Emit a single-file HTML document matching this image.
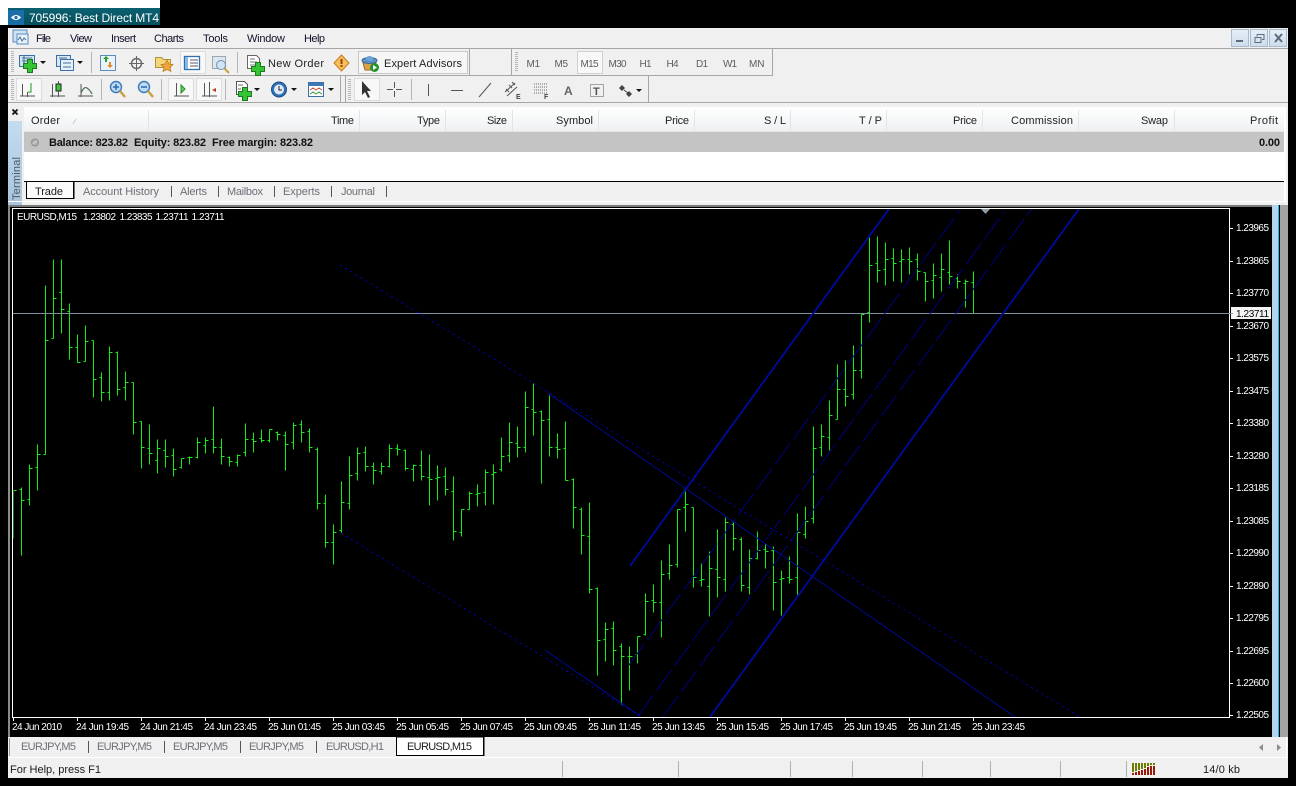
<!DOCTYPE html>
<html><head><meta charset="utf-8"><title>MT4</title>
<style>
html,body{margin:0;padding:0;background:#000;width:1296px;height:786px;overflow:hidden}
svg{display:block;position:absolute;left:0;top:0}
text{font-family:"Liberation Sans",sans-serif;font-size:11px;fill:#1a1a1a}
.w text{fill:#fff;font-size:10px}
.tf text{fill:#5c5c5c;font-size:10px}
.ot text{fill:#6e6e78}
.h text{fill:#222}
.b text{font-weight:bold;fill:#111}
.m text{fill:#10102a}
</style></head><body>
<svg width="1296" height="786" viewBox="0 0 1296 786" xmlns="http://www.w3.org/2000/svg">
<defs>
<linearGradient id="hd" x1="0" y1="0" x2="0" y2="1"><stop offset="0" stop-color="#fff"/><stop offset="1" stop-color="#eef0f2"/></linearGradient>
<linearGradient id="bl" x1="0" y1="0" x2="0" y2="1"><stop offset="0" stop-color="#c4dcf0"/><stop offset="1" stop-color="#a9c4dc"/></linearGradient>
<linearGradient id="btn" x1="0" y1="0" x2="0" y2="1"><stop offset="0" stop-color="#e6eff7"/><stop offset="1" stop-color="#cddcec"/></linearGradient>
<linearGradient id="tt" x1="0" y1="0" x2="0" y2="1"><stop offset="0" stop-color="#0a6070"/><stop offset="1" stop-color="#07505f"/></linearGradient>
<clipPath id="cc"><rect x="13" y="209" width="1217" height="508"/></clipPath>
<g id="plus"><path d="M-2.500-6.500h5v4h4v5h-4v4h-5v-4h-4v-5h4z" fill="#35c435" stroke="#1c7a1c" stroke-width="1"/></g>
<path id="arr" d="M-3 0h6l-3 3z" fill="#111"/>
</defs>

<!-- title -->
<rect x="0" y="0" width="160" height="25" fill="#fff"/>
<rect x="8" y="8" width="152" height="17" fill="url(#tt)"/>
<rect x="8" y="10" width="16" height="15" fill="#1a6ea8"/>
<path d="M11 17.500q5-5 10 0q-5 5-10 0z" fill="#fff"/><circle cx="16" cy="17.500" r="1.600" fill="#1a6ea8"/>
<text x="29" y="22" style="font-size:12px;fill:#fff" textLength="130">705996: Best Direct MT4</text>
<rect x="0" y="25" width="160" height="3" fill="#000"/>

<!-- window bg -->
<rect x="8" y="28" width="1280" height="177" fill="#f0f0f0"/>

<!-- menu -->
<rect x="13" y="30" width="14" height="12" fill="#cfe2f4" stroke="#5a8cc0"/>
<rect x="17" y="34" width="11" height="10" fill="#e8f0f8" stroke="#5a8cc0"/>
<path d="M18 40l2-3 2 4 2-3 2 2" fill="none" stroke="#4a6f95"/>
<g class="m">
<text x="36" y="42" textLength="15">File</text>
<text x="70" y="42" textLength="22">View</text>
<text x="111" y="42" textLength="25">Insert</text>
<text x="154" y="42" textLength="30">Charts</text>
<text x="203" y="42" textLength="25">Tools</text>
<text x="247" y="42" textLength="38">Window</text>
<text x="304" y="42" textLength="21">Help</text>
</g>
<!-- window buttons -->
<g stroke="#a8bacb" fill="url(#btn)">
<rect x="1231.500" y="29.500" width="17" height="17"/><rect x="1250.500" y="29.500" width="17" height="17"/><rect x="1269.500" y="29.500" width="17" height="17"/>
</g>
<rect x="1236" y="40" width="7" height="2" fill="#5a6c7e"/>
<path d="M1257 34.500h7v5h-2M1257 34.500v2M1255 37.500h6v5h-6z" fill="none" stroke="#5a6c7e"/>
<path d="M1275 34l7 8M1282 34l-7 8" stroke="#5a6c7e" stroke-width="2"/>

<!-- toolbar lines -->
<rect x="8" y="48" width="1280" height="1" fill="#a6a6a6"/>
<rect x="8" y="75" width="765" height="1" fill="#a6a6a6"/>
<rect x="8" y="102" width="1280" height="1" fill="#a6a6a6"/>
<g fill="#a6a6a6"><rect x="469" y="49" width="1" height="26"/><rect x="511" y="49" width="1" height="26"/><rect x="772" y="49" width="1" height="27"/><rect x="340" y="76" width="1" height="26"/><rect x="345" y="76" width="1" height="26"/><rect x="648" y="76" width="1" height="26"/></g>
<g stroke="#b8b8b8" stroke-dasharray="1 1" stroke-width="3">
<path d="M12.500 51V73M12.500 79V100M349.500 79V100"/><path d="M516.500 52V72"/>
</g>
<g fill="#b4b4b4"><rect x="91" y="52" width="1" height="21"/><rect x="237" y="52" width="1" height="21"/><rect x="101" y="79" width="1" height="21"/><rect x="161" y="79" width="1" height="21"/><rect x="225" y="79" width="1" height="21"/><rect x="411" y="79" width="1" height="21"/></g>

<!-- toolbar 1 icons -->
<rect x="19.500" y="55.500" width="15" height="11" fill="#cfe3f5" stroke="#3c6fa6"/><path d="M22 58h10M22 61h8M24 56v9" stroke="#4a6d92" fill="none"/>
<use href="#plus" x="30" y="66"/><use href="#arr" x="43" y="61"/>
<rect x="56.500" y="55.500" width="14" height="11" fill="#d8e8f6" stroke="#3c6fa6"/><rect x="60.500" y="59.500" width="13" height="11" fill="#e6f0f9" stroke="#3c6fa6"/><path d="M59 58h8M63 63h8M63 67h8" stroke="#4a6d92"/>
<use href="#arr" x="80" y="61"/>
<rect x="100.500" y="55.500" width="15" height="15" fill="#eaf3fb" stroke="#5b8db8"/><path d="M105 62v-3h-2l3-3 3 3h-2v3z" fill="#2aa02a"/><path d="M109 62v3h-2l3 3 3-3h-2v-3z" fill="#e08a20"/>
<circle cx="136.500" cy="63.500" r="5" fill="none" stroke="#666" stroke-width="1.400"/><path d="M136.500 56v15M129 63.500h15" stroke="#666"/>
<path d="M155.500 57.500h6l2 2h7v8h-15z" fill="#f5d77a" stroke="#b0913a"/><path d="M167 60l2 4 4 .5-3 3 1 4-4-2-4 2 1-4-3-3 4-.5z" fill="#f0a53a" stroke="#b87a20" stroke-width=".7"/>
<rect x="180.500" y="51.500" width="25" height="22" fill="#f8f8f8" stroke="#dcdcdc"/>
<rect x="184.500" y="56.500" width="15" height="13" fill="#fff" stroke="#2f6fb0" stroke-width="1.300"/><rect x="185" y="57" width="3" height="12" fill="#8ab8e0"/><path d="M190 60h8M190 63h8M190 66h8" stroke="#557"/>
<rect x="212.500" y="56.500" width="13" height="12" fill="#dfe6ee" stroke="#9aa6b2"/><circle cx="221" cy="65" r="4.500" fill="#cfe4f5" stroke="#6f93b3"/><path d="M224 68l5 5" stroke="#c9a040" stroke-width="2"/>
<path d="M247.500 55.500h9l3 3v10h-12z" fill="#fff" stroke="#666"/><path d="M250 59h5M250 62h7M250 65h5" stroke="#777"/><use href="#plus" x="258" y="69"/>
<g class="h"><text x="268" y="67" textLength="56">New Order</text></g>
<path d="M341.500 55l7.500 8-7.500 8-7.500-8z" fill="#f6c05a" stroke="#c67c1c"/><rect x="340.500" y="59" width="2" height="5" fill="#a03a10"/><rect x="340.500" y="65" width="2" height="2" fill="#a03a10"/>
<rect x="358.500" y="51.500" width="109" height="22" fill="#f6f6f6" stroke="#c8c8c8"/>
<path d="M363 63l13 0-2 7h-9z" fill="#dfa04a" stroke="#a06a20"/><ellipse cx="369.500" cy="60.500" rx="7.500" ry="3" fill="#5c92c8" stroke="#386a9a"/><ellipse cx="369.500" cy="58.500" rx="3.500" ry="2.500" fill="#6da4d8"/>
<circle cx="374.500" cy="67.500" r="4.500" fill="#23932b"/><path d="M373 65l4 2.500-4 2.500z" fill="#fff"/>
<g class="h"><text x="384" y="67" textLength="78">Expert Advisors</text></g>

<!-- timeframes -->
<rect x="577.500" y="51.500" width="25" height="22" fill="#f8f8f8" stroke="#d0d0d0"/>
<g class="tf">
<text x="526.500" y="67" textLength="13.500">M1</text><text x="554.500" y="67" textLength="13.500">M5</text><text x="580.500" y="67" textLength="18">M15</text><text x="608.500" y="67" textLength="18">M30</text><text x="639.500" y="67" textLength="12">H1</text><text x="666.500" y="67" textLength="12">H4</text><text x="696" y="67" textLength="12">D1</text><text x="723" y="67" textLength="14">W1</text><text x="749" y="67" textLength="15.500">MN</text>
</g>

<!-- toolbar 2 icons -->
<rect x="16.500" y="78.500" width="25" height="22" fill="#f8f8f8" stroke="#dcdcdc"/>
<path d="M22.500 84v12M35 96H20M27.500 92v5" fill="none" stroke="#555"/><path d="M31 83v9h-3" fill="none" stroke="#1e9a1e"/>
<path d="M52.500 84v13M65 96H50" fill="none" stroke="#555"/><path d="M58.500 81v16" stroke="#555"/><rect x="56" y="84" width="5" height="7" fill="#38c838" stroke="#222"/>
<path d="M81 84v13M93 96H78" fill="none" stroke="#555"/><path d="M81 93q3-7 6-5t5 6" fill="none" stroke="#4a6f55" stroke-width="1.200"/>
<circle cx="116" cy="87" r="5.500" fill="#bcdcf5" stroke="#3c7ab5" stroke-width="1.400"/><path d="M113 87h6M116 84v6" stroke="#2d6aa5" stroke-width="1.500"/><path d="M120 91l5 6" stroke="#c9a040" stroke-width="2.500"/>
<circle cx="144" cy="87" r="5.500" fill="#bcdcf5" stroke="#3c7ab5" stroke-width="1.400"/><path d="M141 87h6" stroke="#2d6aa5" stroke-width="1.500"/><path d="M148 91l5 6" stroke="#c9a040" stroke-width="2.500"/>
<rect x="168.500" y="78.500" width="25" height="22" fill="#f8f8f8" stroke="#dcdcdc"/><rect x="196.500" y="78.500" width="25" height="22" fill="#f8f8f8" stroke="#dcdcdc"/>
<path d="M176.500 83v13M189 96H174" fill="none" stroke="#555"/><path d="M181 85l4 4-4 4z" fill="#6fd06f" stroke="#1e8a1e"/>
<path d="M204.500 83v13M217 96H202M209.500 82v15" fill="none" stroke="#555"/><path d="M216 88l-4 2 4 2z" fill="#c03a20"/>
<path d="M236.500 81.500h8l3 3v10h-11z" fill="#fff" stroke="#555"/><path d="M238 85h5M238 89h3" stroke="#666"/><use href="#plus" x="245" y="94"/><use href="#arr" x="257" y="88"/>
<circle cx="279" cy="89.500" r="7.500" fill="#2d72b8" stroke="#1a4a80"/><circle cx="279" cy="89.500" r="5" fill="#dfeaf5"/><path d="M279 86v4h3" fill="none" stroke="#223" /><use href="#arr" x="294" y="88"/>
<rect x="308.500" y="82.500" width="15" height="14" fill="#fff" stroke="#3c6fa6"/><rect x="309" y="83" width="14" height="3" fill="#3c7ab5"/><path d="M310 90l3-2 3 2 3-2 3 2" fill="none" stroke="#d05030"/><path d="M310 94l3-2 3 2 3-2 3 2" fill="none" stroke="#3a9a3a"/><use href="#arr" x="331" y="88"/>
<rect x="354.500" y="78.500" width="25" height="22" fill="#f8f8f8" stroke="#dcdcdc"/>
<path d="M362 81l0 14 3-3 3 6 2-1-3-6h4z" fill="#333"/>
<path d="M394.500 82v6M394.500 91v6M387 89.500h6M396 89.500h6" stroke="#555"/>
<path d="M428.500 84v12" stroke="#555"/><path d="M451 90.500h12" stroke="#555"/><path d="M479 97l12-14" stroke="#555"/>
<path d="M505 92l10-9M507 96l10-9M509 85l3 3M512 82l3 3M506 89l3 3" stroke="#555" fill="none"/>
<text x="516" y="99" style="font-size:7px;font-weight:bold;fill:#444">E</text>
<path d="M534 84h13M534 87h13M534 90h13M534 93h13" stroke="#666" stroke-dasharray="1 1"/>
<text x="544" y="99" style="font-size:7px;font-weight:bold;fill:#444">F</text>
<text x="564" y="95" style="font-size:12px;font-weight:bold;fill:#666">A</text>
<rect x="590.500" y="84.500" width="13" height="12" fill="none" stroke="#555" stroke-dasharray="1 1"/>
<text x="593" y="95" style="font-size:11px;font-weight:bold;fill:#555">T</text>
<path d="M622 85l3 3-3 3-3-3zM629 91l3 3-3 3-3-3z" fill="#444"/><path d="M624 90l4 3" stroke="#444"/><use href="#arr" x="639" y="89"/>

<!-- terminal -->
<rect x="8" y="103" width="15" height="18" fill="#f0f0f0"/>
<rect x="8" y="121" width="14" height="84" fill="url(#bl)"/>
<path d="M12.500 109.500l5 5M17.500 109.500l-5 5" stroke="#111" stroke-width="1.800"/>
<text transform="translate(20 200) rotate(-90)" textLength="43" style="fill:#4c5a66">Terminal</text>
<rect x="24" y="107" width="1260" height="74" fill="#fff"/>
<rect x="24" y="107" width="1260" height="25" fill="url(#hd)"/>
<rect x="24" y="131" width="1260" height="1" fill="#e4e4e4"/>
<g fill="#e2e4e6"><rect x="148" y="110" width="1" height="21"/><rect x="359" y="110" width="1" height="21"/><rect x="445" y="110" width="1" height="21"/><rect x="512" y="110" width="1" height="21"/><rect x="598" y="110" width="1" height="21"/><rect x="694" y="110" width="1" height="21"/><rect x="790" y="110" width="1" height="21"/><rect x="886" y="110" width="1" height="21"/><rect x="982" y="110" width="1" height="21"/><rect x="1078" y="110" width="1" height="21"/><rect x="1174" y="110" width="1" height="21"/></g>
<g class="h">
<text x="31" y="124" textLength="29">Order</text>
<text x="331" y="124" textLength="23">Time</text><text x="417" y="124" textLength="23">Type</text><text x="487" y="124" textLength="20">Size</text><text x="556" y="124" textLength="37">Symbol</text><text x="665" y="124" textLength="24">Price</text><text x="764" y="124" textLength="22">S / L</text><text x="859" y="124" textLength="23">T / P</text><text x="953" y="124" textLength="24">Price</text><text x="1011" y="124" textLength="62">Commission</text><text x="1141" y="124" textLength="27">Swap</text><text x="1250" y="124" textLength="28">Profit</text>
</g>
<path d="M73 124l3-5" stroke="#c8c8c8" fill="none"/>
<rect x="24" y="132" width="1260" height="20" fill="#c4c4c4"/>
<circle cx="35" cy="142.500" r="3.500" fill="#b0b0b0" stroke="#8e8e8e"/><path d="M33 144l4-3" stroke="#dcdcdc"/>
<g class="b"><text x="49" y="146" textLength="79">Balance: 823.82</text><text x="134" y="146" textLength="72">Equity: 823.82</text><text x="212" y="146" textLength="101">Free margin: 823.82</text><text x="1259" y="146" textLength="21">0.00</text></g>
<rect x="24" y="181" width="1260" height="1" fill="#000"/>
<rect x="1284" y="107" width="2" height="95" fill="#fff"/>
<rect x="8" y="201" width="1278" height="1" fill="#fff"/>
<rect x="27" y="182" width="46" height="16" fill="#fbfbfb"/>
<rect x="26" y="198" width="48" height="1" fill="#000"/><rect x="73" y="182" width="1.500" height="17" fill="#000"/><rect x="26" y="182" width="1" height="17" fill="#000"/>
<text x="35" y="195" textLength="28">Trade</text>
<g class="ot">
<text x="83" y="195" textLength="76">Account History</text><text x="180" y="195" textLength="27">Alerts</text><text x="227" y="195" textLength="36">Mailbox</text><text x="283" y="195" textLength="37">Experts</text><text x="341" y="195" textLength="34">Journal</text>
</g>
<g fill="#555"><rect x="171" y="186" width="1" height="11"/><rect x="218" y="186" width="1" height="11"/><rect x="274" y="186" width="1" height="11"/><rect x="331" y="186" width="1" height="11"/><rect x="386" y="186" width="1" height="11"/></g>

<!-- chart area -->
<rect x="8" y="205" width="1280" height="532" fill="#000"/>
<rect x="8" y="205" width="1264" height="2" fill="#7a7a7a"/>
<rect x="8" y="205" width="2" height="532" fill="#8a8a8a"/>
<rect x="1272" y="205" width="6" height="532" fill="#b6d3ee"/>
<rect x="1278" y="205" width="1" height="532" fill="#10bfe8"/>
<rect x="1280" y="205" width="8" height="532" fill="#a3a3a3"/>
<rect x="12.500" y="208.500" width="1217" height="509" fill="#000" stroke="#fff"/>

<!-- bars -->
<g clip-path="url(#cc)" transform="translate(.5 .5)" shape-rendering="crispEdges">
<path fill="none" stroke="#10f010" stroke-width="1" d="M13 490V538M13 490h3
M21 487V555M19 489h2M21 500h3
M29 464V505M27 499h2M29 468h3
M37 444V490M35 467h2M37 454h3
M45 285V454M43 454h2M45 340h3
M53 259V338M51 338h2M53 298h3
M61 259V333M59 292h2M61 309h3
M69 303V359M67 311h2M69 347h3
M77 334V362M75 347h2M77 362h3
M85 325V361M83 361h2M85 341h3
M93 340V397M91 340h2M93 379h3
M101 372V401M99 377h2M101 392h3
M109 346V400M107 392h2M109 352h3
M117 351V395M115 352h2M117 389h3
M125 371V400M123 387h2M125 382h3
M133 382V434M131 382h2M133 422h3
M141 421V468M139 421h2M141 447h3
M149 424V464M147 448h2M149 453h3
M157 439V473M155 460h2M157 448h3
M165 439V467M163 450h2M165 456h3
M173 448V476M171 455h2M173 469h3
M181 458V468M179 467h2M181 458h3
M189 456V464M187 457h2M189 457h3
M197 437V458M195 457h2M197 442h3
M205 437V453M203 445h2M205 440h3
M213 406V453M211 439h2M213 447h3
M221 438V464M219 447h2M221 456h3
M229 456V466M227 457h2M229 461h3
M237 454V466M235 462h2M237 455h3
M245 423V456M243 452h2M245 439h3
M253 432V452M251 439h2M253 441h3
M261 429V442M259 438h2M261 440h3
M269 429V442M267 440h2M269 429h3
M277 431V440M275 432h2M277 434h3
M285 431V470M283 435h2M285 444h3
M293 422V449M291 442h2M293 425h3
M301 420V442M299 424h2M301 432h3
M309 428V452M307 431h2M309 447h3
M317 447V509M315 449h2M317 503h3
M325 494V547M323 503h2M325 542h3
M333 524V564M331 542h2M333 532h3
M341 481V533M339 530h2M341 502h3
M349 456V509M347 503h2M349 475h3
M357 447V480M355 473h2M357 453h3
M365 446V471M363 452h2M365 466h3
M373 462V484M371 466h2M373 470h3
M381 462V474M379 471h2M381 466h3
M389 444V467M387 466h2M389 448h3
M397 444V455M395 448h2M397 449h3
M405 449V470M403 450h2M405 468h3
M413 464V481M411 469h2M413 465h3
M421 450V480M419 465h2M421 476h3
M429 454V505M427 477h2M429 479h3
M437 465V500M435 478h2M437 477h3
M445 467V495M443 476h2M445 489h3
M453 476V540M451 491h2M453 531h3
M461 509V536M459 532h2M461 509h3
M469 491V509M467 509h2M469 493h3
M477 484V506M475 494h2M477 493h3
M485 469V505M483 492h2M485 472h3
M493 464V504M491 474h2M493 472h3
M501 437V471M499 469h2M501 456h3
M509 422V462M507 455h2M509 442h3
M517 426V457M515 443h2M517 447h3
M525 391V452M523 447h2M525 407h3
M533 383V435M531 409h2M533 412h3
M541 410V483M539 411h2M541 420h3
M549 395V456M547 419h2M549 447h3
M557 433V458M555 447h2M557 449h3
M565 421V480M563 448h2M565 480h3
M573 478V528M571 479h2M573 507h3
M581 507V554M579 509h2M581 535h3
M589 502V593M587 536h2M589 589h3
M597 587V675M595 588h2M597 640h3
M605 622V661M603 639h2M605 629h3
M613 621V665M611 628h2M613 650h3
M621 643V704M619 646h2M621 656h3
M629 646V690M627 656h2M629 656h3
M637 636V663M635 654h2M637 636h3
M645 593V635M643 634h2M645 601h3
M653 584V612M651 600h2M653 602h3
M661 560V637M659 602h2M661 574h3
M669 544V579M667 573h2M669 565h3
M677 509V567M675 564h2M677 509h3
M685 491V531M683 507h2M685 504h3
M693 507V587M691 507h2M693 577h3
M701 563V586M699 580h2M701 579h3
M709 551V616M707 586h2M709 568h3
M717 529V597M715 569h2M717 577h3
M725 517V591M723 579h2M725 522h3
M733 522V550M731 524h2M733 538h3
M741 537V591M739 539h2M741 585h3
M749 549V594M747 587h2M749 558h3
M757 531V559M755 558h2M757 550h3
M765 544V568M763 549h2M765 551h3
M773 546V610M771 550h2M773 582h3
M781 570V615M779 579h2M781 578h3
M789 556V583M787 577h2M789 579h3
M797 513V595M795 577h2M797 532h3
M805 506V538M803 534h2M805 521h3
M813 426V523M811 518h2M813 448h3
M821 424V456M819 447h2M821 436h3
M829 400V450M827 437h2M829 415h3
M837 364V419M835 419h2M837 389h3
M845 360V406M843 389h2M845 396h3
M853 345V399M851 394h2M853 370h3
M861 314V378M859 370h2M861 314h3
M869 237V322M867 312h2M869 265h3
M877 236V282M875 263h2M877 270h3
M885 242V285M883 269h2M885 259h3
M893 248V281M891 258h2M893 263h3
M901 249V282M899 261h2M901 259h3
M909 247V274M907 259h2M909 261h3
M917 253V280M915 259h2M917 271h3
M925 272V301M923 272h2M925 281h3
M933 263V298M931 280h2M933 275h3
M941 253V291M939 277h2M941 269h3
M949 240V284M947 272h2M949 276h3
M957 274V288M955 278h2M957 281h3
M965 279V307M963 283h2M965 281h3
M973 271V313M971 282h2M973 313h3"/>
</g>
<!-- price line -->
<rect x="13" y="313" width="1217" height="1" fill="#7f90a0"/>

<!-- objects -->
<g clip-path="url(#cc)" fill="none" shape-rendering="crispEdges">
<path d="M630 566L889 209M710 717L1079 209" stroke="#000a90" stroke-width="2"/>
<g stroke="#00007c" stroke-width="1" stroke-dasharray="26 5">
<path d="M629 665L960 210M638 716L1004 212M663 717L1033 207"/>
</g>
<path d="M548 393L1015 717M545 650L640 716" stroke="#000a90" stroke-width="1"/>
<g stroke="#0000c0" stroke-width="1" stroke-dasharray="2 4">
<path d="M340 265L1080 717M341 533L640 716"/>
</g>
</g>
<path d="M981 209h9l-4.500 5z" fill="#8e9ca4"/>

<!-- axes -->
<g fill="#fff">
<rect x="1230" y="228" width="3" height="1"/><rect x="1230" y="261" width="3" height="1"/><rect x="1230" y="293" width="3" height="1"/><rect x="1230" y="326" width="3" height="1"/><rect x="1230" y="358" width="3" height="1"/><rect x="1230" y="391" width="3" height="1"/><rect x="1230" y="423" width="3" height="1"/><rect x="1230" y="456" width="3" height="1"/><rect x="1230" y="488" width="3" height="1"/><rect x="1230" y="521" width="3" height="1"/><rect x="1230" y="553" width="3" height="1"/><rect x="1230" y="586" width="3" height="1"/><rect x="1230" y="618" width="3" height="1"/><rect x="1230" y="651" width="3" height="1"/><rect x="1230" y="683" width="3" height="1"/><rect x="1230" y="715" width="3" height="1"/>
<rect x="13" y="718" width="1" height="3"/><rect x="77" y="718" width="1" height="3"/><rect x="141" y="718" width="1" height="3"/><rect x="205" y="718" width="1" height="3"/><rect x="269" y="718" width="1" height="3"/><rect x="333" y="718" width="1" height="3"/><rect x="397" y="718" width="1" height="3"/><rect x="461" y="718" width="1" height="3"/><rect x="525" y="718" width="1" height="3"/><rect x="589" y="718" width="1" height="3"/><rect x="653" y="718" width="1" height="3"/><rect x="717" y="718" width="1" height="3"/><rect x="781" y="718" width="1" height="3"/><rect x="845" y="718" width="1" height="3"/><rect x="909" y="718" width="1" height="3"/><rect x="973" y="718" width="1" height="3"/>
</g>
<g class="w">
<text x="17" y="220" textLength="60">EURUSD,M15</text>
<text x="83" y="220" textLength="33">1.23802</text><text x="119.500" y="220" textLength="33">1.23835</text><text x="155.500" y="220" textLength="33">1.23711</text><text x="191.500" y="220" textLength="33">1.23711</text>
<text x="1236" y="231" textLength="33">1.23965</text><text x="1236" y="264" textLength="33">1.23865</text><text x="1236" y="296" textLength="33">1.23770</text><text x="1236" y="329" textLength="33">1.23670</text><text x="1236" y="361" textLength="33">1.23575</text><text x="1236" y="394" textLength="33">1.23475</text><text x="1236" y="426" textLength="33">1.23380</text><text x="1236" y="459" textLength="33">1.23280</text><text x="1236" y="491" textLength="33">1.23185</text><text x="1236" y="524" textLength="33">1.23085</text><text x="1236" y="556" textLength="33">1.22990</text><text x="1236" y="589" textLength="33">1.22890</text><text x="1236" y="621" textLength="33">1.22795</text><text x="1236" y="654" textLength="33">1.22695</text><text x="1236" y="686" textLength="33">1.22600</text><text x="1236" y="718" textLength="33">1.22505</text>
<text x="12" y="730" textLength="50">24 Jun 2010</text><text x="76" y="730" textLength="53">24 Jun 19:45</text><text x="140" y="730" textLength="53">24 Jun 21:45</text><text x="204" y="730" textLength="53">24 Jun 23:45</text><text x="268" y="730" textLength="53">25 Jun 01:45</text><text x="332" y="730" textLength="53">25 Jun 03:45</text><text x="396" y="730" textLength="53">25 Jun 05:45</text><text x="460" y="730" textLength="53">25 Jun 07:45</text><text x="524" y="730" textLength="53">25 Jun 09:45</text><text x="588" y="730" textLength="53">25 Jun 11:45</text><text x="652" y="730" textLength="53">25 Jun 13:45</text><text x="716" y="730" textLength="53">25 Jun 15:45</text><text x="780" y="730" textLength="53">25 Jun 17:45</text><text x="844" y="730" textLength="53">25 Jun 19:45</text><text x="908" y="730" textLength="53">25 Jun 21:45</text><text x="972" y="730" textLength="53">25 Jun 23:45</text>
</g>
<rect x="1231" y="307" width="40" height="12" fill="#f4f4f4"/>
<text x="1236" y="317" textLength="33" style="font-size:10px;fill:#000">1.23711</text>
<rect x="1230" y="313" width="3" height="1" fill="#7f90a0"/>

<!-- chart tabs -->
<rect x="8" y="737" width="1280" height="41" fill="#f0f0f0"/>
<rect x="8" y="757" width="1278" height="1" fill="#fff"/>
<rect x="1286" y="737" width="1" height="21" fill="#fff"/>
<rect x="9" y="738" width="1" height="18" fill="#9a9a9a"/>
<g class="ot">
<text x="21" y="750" textLength="55">EURJPY,M5</text><text x="97" y="750" textLength="55">EURJPY,M5</text><text x="173" y="750" textLength="55">EURJPY,M5</text><text x="249" y="750" textLength="55">EURJPY,M5</text><text x="326" y="750" textLength="58">EURUSD,H1</text>
</g>
<g fill="#555"><rect x="88" y="741" width="1" height="12"/><rect x="164" y="741" width="1" height="12"/><rect x="240" y="741" width="1" height="12"/><rect x="316" y="741" width="1" height="12"/></g>
<rect x="396.500" y="737" width="87" height="18.500" fill="#fff" stroke="#000"/>
<rect x="483" y="737" width="1.500" height="19" fill="#000"/>
<text x="407" y="750" textLength="65">EURUSD,M15</text>
<path d="M1263 744v7l-4-3.500zM1277 744v7l4-3.500z" fill="#8c8c8c"/>

<!-- status -->
<text x="10" y="773" textLength="91">For Help, press F1</text>
<g fill="#b0b0b0"><rect x="562" y="761" width="1" height="16"/><rect x="678" y="761" width="1" height="16"/><rect x="790" y="761" width="1" height="16"/><rect x="852" y="761" width="1" height="16"/><rect x="922" y="761" width="1" height="16"/><rect x="990" y="761" width="1" height="16"/><rect x="1060" y="761" width="1" height="16"/><rect x="1126" y="761" width="1" height="16"/></g>
<g fill="#6e7d00"><rect x="1132" y="763" width="2" height="9"/><rect x="1135" y="763" width="2" height="8"/><rect x="1138" y="763" width="2" height="7"/><rect x="1141" y="763" width="2" height="6"/><rect x="1144" y="763" width="2" height="5"/><rect x="1147" y="763" width="2" height="3"/><rect x="1150" y="763" width="2" height="2"/><rect x="1153" y="763" width="2" height="2"/></g>
<g fill="#9a1a08"><rect x="1132" y="773" width="2" height="2"/><rect x="1135" y="772" width="2" height="3"/><rect x="1138" y="771" width="2" height="4"/><rect x="1141" y="770" width="2" height="5"/><rect x="1144" y="769" width="2" height="6"/><rect x="1147" y="767" width="2" height="8"/><rect x="1150" y="766" width="2" height="9"/><rect x="1153" y="766" width="2" height="9"/></g>
<text x="1203" y="773" textLength="37">14/0 kb</text>
</svg>
</body></html>
